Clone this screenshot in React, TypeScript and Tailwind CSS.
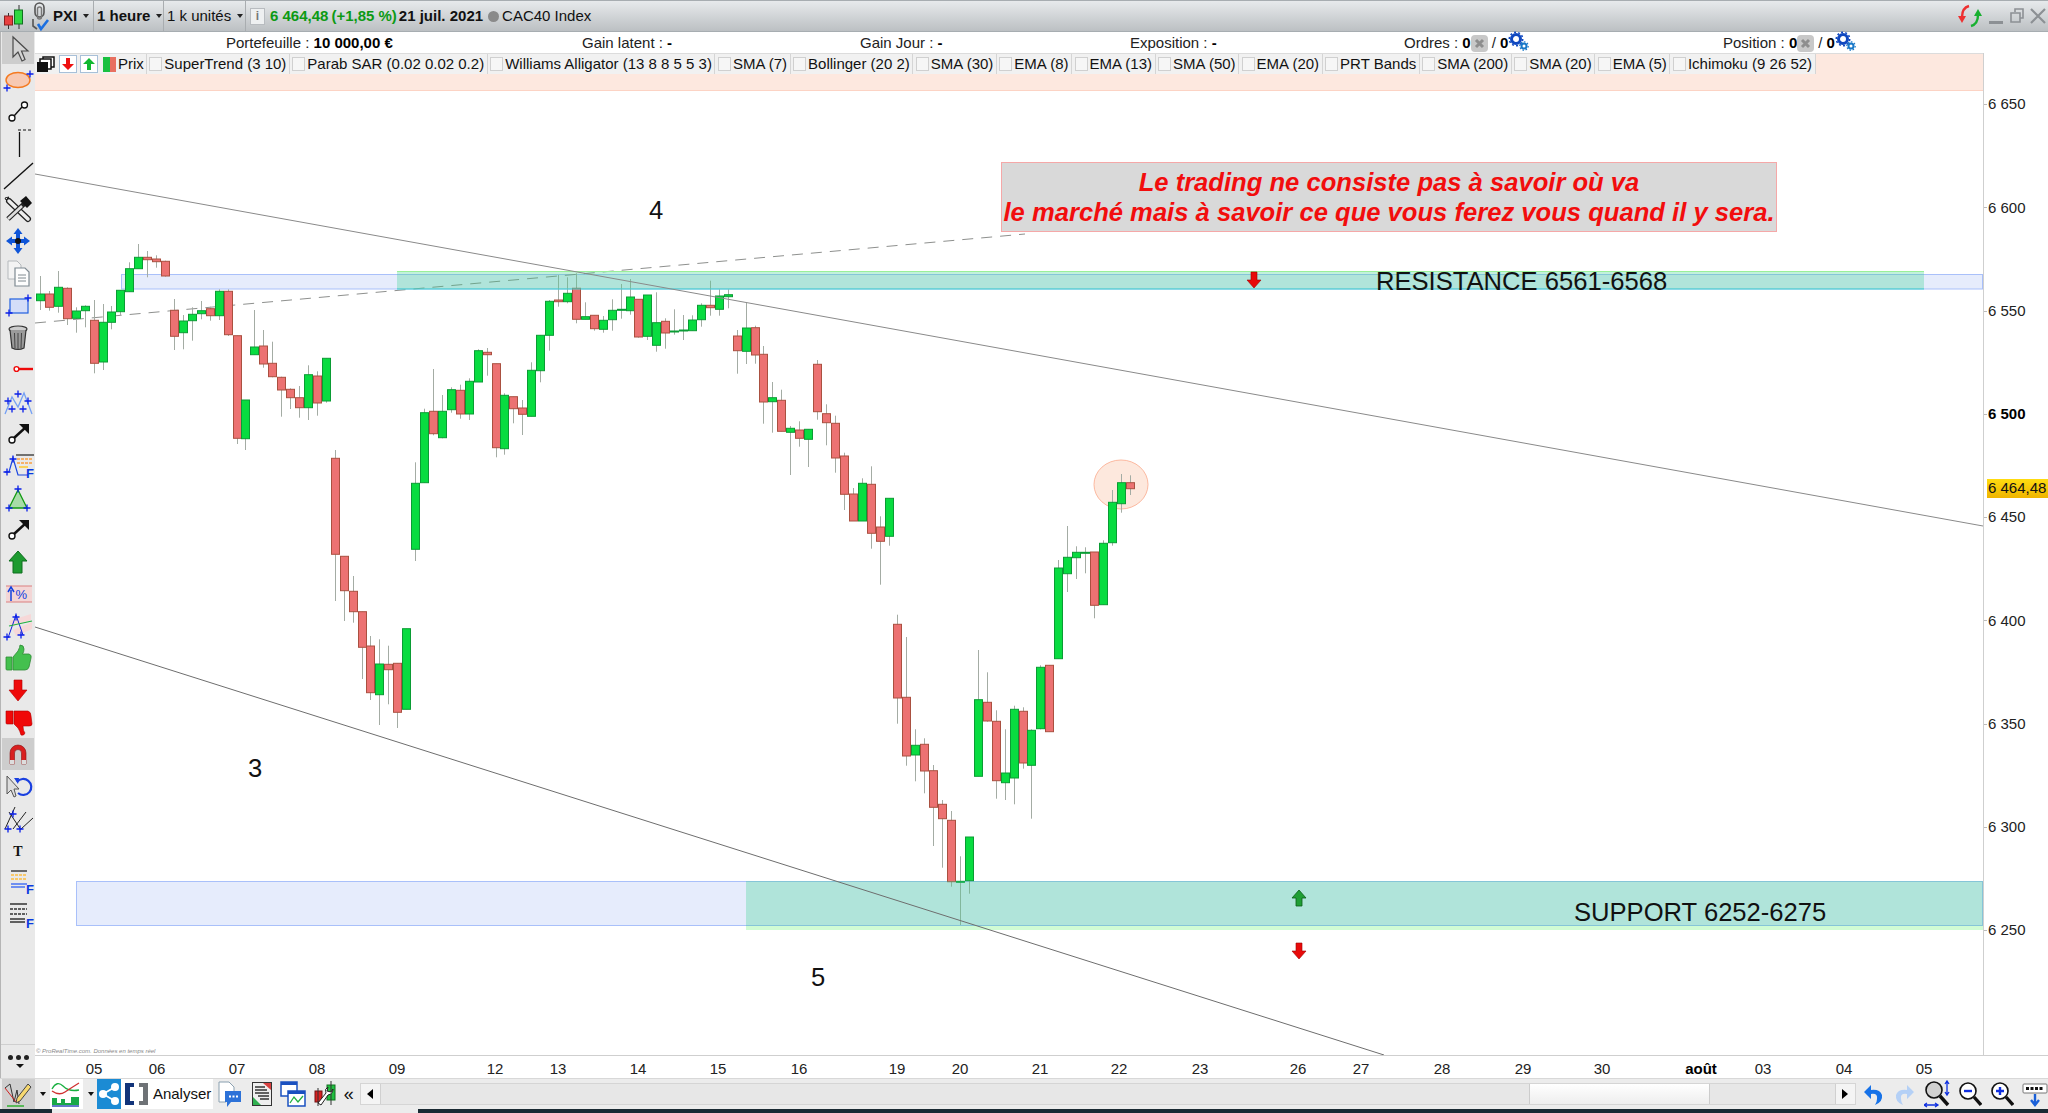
import React from "react";

type Candle = [number, number, number, number, number];

// top, bottom, wick top, wick bottom, 1 = up candle
const candles: Candle[] = [
  [294, 300.7, 276, 310, 1], [294, 307.3, 291, 310.7, 0], [287.3, 306.3, 271, 312.7, 1], [288.3, 318.7, 287.3, 325, 0],
  [311, 318.3, 307.3, 332.7, 1], [306.3, 310.7, 305.3, 327.3, 1], [320.3, 363.3, 300, 373.3, 0], [322.3, 362, 304, 370, 1],
  [312, 322.3, 306, 329.3, 1], [290.3, 311.7, 290, 316, 1], [268.7, 291.7, 262.3, 292, 1], [257.3, 268.7, 244, 268.7, 1],
  [257.3, 259.7, 251, 277.3, 0], [259, 261.7, 255.3, 267.7, 0], [261.3, 276, 260.7, 276.7, 0], [310.3, 336.3, 299, 350, 0],
  [321, 332.7, 315, 349.3, 1], [314.3, 320.7, 307.3, 340.7, 1], [310.7, 313.7, 301, 319.3, 1], [308.7, 315.7, 306.7, 320.7, 0],
  [291.3, 315.7, 289.3, 320, 1], [291.3, 334.7, 289.3, 336, 0], [335.7, 438.3, 335.7, 444, 0], [400, 438.7, 400, 450, 1],
  [347, 354.7, 310, 354.7, 1], [346, 364, 330, 367.7, 0], [363.3, 376.7, 341.7, 377.3, 0], [377.3, 390, 376.7, 416.7, 0],
  [389.3, 397.7, 388.3, 409, 0], [397.7, 407.7, 386, 417.7, 0], [374.7, 407.7, 365.3, 420, 1], [376, 403, 371.3, 415.7, 0],
  [358.3, 401, 358.3, 402.7, 1], [458.3, 554.3, 450, 601, 0], [556.3, 590.7, 556.3, 621, 0], [591.3, 611.7, 576, 622.7, 0],
  [611.7, 647.3, 611.7, 679, 0], [646, 692.7, 636, 700, 0], [664, 694.7, 639.3, 725, 1], [664.3, 669.7, 645.7, 704.3, 0],
  [663.3, 712.3, 663.3, 728, 0], [628.7, 709.3, 628.7, 709.3, 1], [483.3, 549.3, 462.3, 561, 1], [412.7, 482.7, 408.7, 482.7, 1],
  [411.3, 433.7, 369, 435.3, 0], [411.3, 437.7, 395, 438.3, 1], [389.7, 409.7, 387.3, 412.7, 1], [390.3, 414, 384.7, 418.7, 0],
  [381.3, 414, 378.3, 420, 1], [350.7, 382, 349.3, 382, 1], [352.3, 354.7, 348, 375.7, 0], [363.7, 447.7, 363.7, 457.3, 0],
  [395.3, 448.7, 393.3, 454.7, 1], [396.7, 408.7, 396.7, 423.3, 0], [408, 414.3, 400, 435, 0], [370.3, 416.3, 362.3, 416.3, 1],
  [335.3, 370.7, 335.3, 382.3, 1], [301.3, 335.3, 300, 350.7, 1], [300, 301.7, 275, 306.7, 0], [293.3, 301.7, 277.3, 303.3, 1],
  [288.3, 319.3, 273.3, 323.3, 0], [316.7, 319.3, 302.3, 319.3, 1], [315.3, 328.7, 315.3, 330.7, 0], [320.3, 329.3, 316, 332.7, 1],
  [310.3, 319.7, 299.3, 330.7, 1], [309.3, 310, 284, 318.7, 1], [297, 310.7, 279, 314.7, 1], [299.3, 337, 299.3, 337.7, 0],
  [295, 336.3, 295, 340, 1], [322.7, 345.3, 292.3, 351.7, 1], [321.3, 333, 318.3, 348.7, 0], [331, 332, 309.3, 334.7, 1],
  [330, 330.7, 315, 340, 1], [320, 330.7, 315.3, 330.7, 1], [305.3, 319.7, 303.3, 326.7, 1], [305.3, 307.7, 280.7, 315.7, 0],
  [296, 309.3, 289.3, 315.7, 1], [294.7, 296.7, 289.3, 308.3, 1], [336, 350.7, 330, 373.7, 0], [328, 351.3, 302.7, 364, 1],
  [327.7, 355, 325.7, 363.7, 0], [354.3, 402, 346, 423.7, 0], [397.7, 401.7, 382, 432.7, 1], [400.3, 431.3, 389.7, 431.3, 0],
  [428.3, 432.3, 426, 475, 1], [430, 438.3, 421.3, 446.7, 0], [429.3, 439.3, 429.3, 467, 1], [364.3, 411.7, 360, 419.7, 0],
  [413.7, 422.7, 404.3, 445.3, 0], [423.3, 458, 415.7, 472.7, 0], [456, 494.3, 452.7, 510, 0], [494, 521, 488, 521, 0],
  [483.3, 521, 478.3, 521, 1], [484.3, 533.3, 466.3, 548.7, 0], [527, 541.3, 516.3, 584.7, 0], [498.3, 536.3, 498.3, 545.7, 1],
  [624.3, 698, 614.7, 723.7, 0], [697.3, 756, 637, 765.7, 0], [745.3, 755, 729.3, 781.3, 1], [744.3, 771, 738.3, 793.3, 0],
  [770.7, 807.3, 765, 846, 0], [804.3, 818.7, 800, 867.7, 0], [820.3, 881.7, 811, 886.7, 0], [881.3, 882.3, 856.3, 925, 1],
  [837, 880.7, 837, 893.7, 1], [699.7, 776.3, 650, 776.3, 1], [702.3, 721, 672.3, 721.7, 0], [721.3, 780.7, 710.3, 798.7, 0],
  [773, 782.7, 729.3, 800, 1], [709.3, 778, 705.7, 804.3, 1], [711.3, 763, 707.3, 768.7, 0], [730.3, 765.3, 729.3, 818.7, 1],
  [667.3, 728.7, 665.3, 729.3, 1], [665.3, 731.7, 665.3, 731.7, 0], [568, 658.7, 560, 658.7, 1], [557.3, 573.7, 526, 592, 1],
  [552.3, 557.7, 546.3, 579, 1], [552.3, 553.3, 547.3, 573.3, 1], [552, 605.3, 552, 618.3, 0], [543.3, 604.7, 540.3, 604.7, 1],
  [502.3, 542.7, 490, 545.7, 1], [482.7, 503.7, 474, 512.7, 1], [482.7, 488.7, 475.3, 495, 0],
];

const indicators = [
  "SuperTrend (3 10)", "Parab SAR (0.02 0.02 0.2)", "Williams Alligator (13 8 8 5 5 3)", "SMA (7)", "Bollinger (20 2)",
  "SMA (30)", "EMA (8)", "EMA (13)", "SMA (50)", "EMA (20)", "PRT Bands", "SMA (200)", "SMA (20)", "EMA (5)", "Ichimoku (9 26 52)",
];

const prices = ["6 650", "6 600", "6 550", "6 500", "6 450", "6 400", "6 350", "6 300", "6 250"];

const dates: [string, number][] = [
  ["05", 94], ["06", 157], ["07", 237], ["08", 317], ["09", 397], ["12", 495], ["13", 558], ["14", 638], ["15", 718], ["16", 799],
  ["19", 897], ["20", 960], ["21", 1040], ["22", 1119], ["23", 1200], ["26", 1298], ["27", 1361], ["28", 1442], ["29", 1523],
  ["30", 1602], ["août", 1701], ["03", 1763], ["04", 1844], ["05", 1924],
];

const Plus = ({ x, y }: { x: number; y: number }) => (
  <path d={`M${x - 3.5} ${y}h7M${x} ${y - 3.5}v7`} stroke="#0a1fe8" strokeWidth="1.3" fill="none" />
);

const BigF = ({ x, y }: { x: number; y: number }) => (
  <text x={x} y={y} fontSize="13" fontWeight="700" fill="#0a3ae0" fontFamily="Liberation Sans">F</text>
);

const HandleArrow = () => (
  <>
    <circle cx="11" cy="22" r="3" fill="#fff" stroke="#111" strokeWidth="1.4" />
    <path d="M13 20L25 9" stroke="#111" strokeWidth="2.4" />
    <path d="M18 6H28V16Z" fill="#111" />
  </>
);

const toolIcons: React.ReactNode[] = [
  <path key="a" d="M12 4V24L17 19L21 28L24 26.5L20.5 18H27Z" fill="#d4d4d4" stroke="#4a4a4a" strokeWidth="1.2" />,
  <g key="b"><ellipse cx="17" cy="15" rx="12" ry="7.5" fill="#f7c9b2" stroke="#f47a20" strokeWidth="1.4" /><Plus x={29} y={9} /><Plus x={6} y={23} /></g>,
  <g key="c"><path d="M13 19L21 10" stroke="#111" strokeWidth="1.4" /><circle cx="11" cy="21" r="3" fill="#fff" stroke="#111" strokeWidth="1.3" /><circle cx="23.5" cy="8" r="3" fill="#fff" stroke="#111" strokeWidth="1.3" /></g>,
  <g key="d"><path d="M18.500 3V28" stroke="#111" strokeWidth="1.3" /><path d="M17 1H32" stroke="#111" strokeWidth="1.2" strokeDasharray="3 2" /></g>,
  <path key="e" d="M3 28L32 2" stroke="#111" strokeWidth="1.4" />,
  <g key="f">
    <path d="M8 7L27 25" stroke="#222" strokeWidth="6" strokeLinecap="round" /><path d="M8 7L27 25" stroke="#eee" strokeWidth="3.5" strokeLinecap="round" />
    <path d="M7 25L23 10" stroke="#222" strokeWidth="5" /><path d="M7 25L21 12" stroke="#ddd" strokeWidth="2.6" />
    <path d="M19 7L25 2L31 9L26 14Z" fill="#111" /><path d="M5 6L8 3L4 4Z" fill="#fff" stroke="#222" />
  </g>,
  <g key="g" fill="#0f55d8"><path d="M17 2L21.500 8H12.500Z" /><path d="M17 28L21.500 22H12.500Z" /><path d="M5 15L11 10.500V19.500Z" /><path d="M29 15L23 10.500V19.500Z" /><path d="M15 8H19V22H15Z M10 13H24V17H10Z" /><circle cx="17" cy="15" r="3" fill="#111" /></g>,
  <g key="h"><path d="M7 3H16L20 7V21H7Z" fill="#f3f3f3" stroke="#b5b9bc" /><path d="M14 10H24L28 14V28H14Z" fill="#fdfdfd" stroke="#7f8a92" strokeWidth="1.2" /><path d="M17 17H25M17 20H25M17 23H25" stroke="#808a90" /></g>,
  <g key="i"><rect x="9" y="9" width="18" height="14" fill="#d4ddf8" stroke="#2060e0" strokeWidth="1.2" /><Plus x={27} y={8} /><Plus x={8} y={23} /></g>,
  <g key="j"><ellipse cx="17" cy="7" rx="9" ry="3" fill="#ccc" stroke="#333" strokeWidth="1.2" /><path d="M9 8L11 26Q17 29 23 26L25 8" fill="#9a9a9a" stroke="#333" strokeWidth="1.2" /><path d="M13.500 11L14 26M17 11V27M20.500 11L20 26" stroke="#444" /></g>,
  <g key="k"><circle cx="15.500" cy="15" r="2.4" fill="#fff" stroke="#ee0a0a" strokeWidth="1.4" /><path d="M18 15H32" stroke="#ee0a0a" strokeWidth="2.4" /></g>,
  <g key="l"><path d="M4 28L11 11L17 21L23 7L31 28" fill="none" stroke="#74a0f4" strokeWidth="1.3" /><Plus x={7} y={15} /><Plus x={11} y={23} /><Plus x={17} y={8} /><Plus x={22} y={23} /><Plus x={27} y={15} /></g>,
  <g key="m"><HandleArrow /></g>,
  <g key="n"><path d="M4 22H8L12 8L17 25H27" fill="none" stroke="#1a46e0" strokeWidth="1.2" /><path d="M15 5H33" stroke="#222" strokeWidth="1.2" /><path d="M16 9H32M16 13H32" stroke="#f6b26b" strokeWidth="2" strokeDasharray="3 1" /><path d="M18 17H27" stroke="#f9d05c" strokeWidth="2" /><Plus x={6} y={22} /><Plus x={12} y={9} /><BigF x={25} y={28} /></g>,
  <g key="o"><path d="M8 26L17 8L26 26Z" fill="#a8dca8" stroke="#129a12" strokeWidth="1.3" /><Plus x={17} y={7} /><Plus x={8} y={26} /><Plus x={26} y={26} /></g>,
  <g key="p"><HandleArrow /></g>,
  <path key="q" d="M17 4L26 14H21V26H12V14H8Z" fill="#1d9a30" stroke="#0f6e1e" strokeWidth="1" />,
  <g key="r"><rect x="5" y="7" width="26" height="16" fill="#f3d6d6" /><path d="M5 7H31M5 23H31" stroke="#dc8080" strokeWidth="1.2" /><path d="M10 22V11M7 13L10 8L13 13" fill="none" stroke="#1040e0" strokeWidth="1.5" /><text x="14.500" y="20" fontSize="13" fill="#1040e0" fontFamily="Liberation Sans">%</text></g>,
  <g key="s"><path d="M8 10L30 3L30 9L10 16Z" fill="#f6d8d8" /><path d="M12 19L31 11V18L15 25Z" fill="#f6d8d8" /><path d="M7 27L15 4L22 24" fill="none" stroke="#0f1fe0" strokeWidth="1" /><path d="M8 15L31 10" stroke="#20b040" strokeWidth="1.2" /><Plus x={15} y={6} /><Plus x={6} y={26} /><Plus x={20} y={24} /></g>,
  <path key="t" d="M5 14H11V27H6Q5 27 5 26ZM12 14L17 8Q19 4 19 2Q23 2 23 6Q23 9 21.500 11H28Q31 12 30 15L28 24Q27 27 24 27H12Z" fill="#44c04e" stroke="#2e8a36" strokeWidth="0.8" />,
  <path key="u" d="M13 5H21V15H26L17 26L8 15H13Z" fill="#ee0a0a" stroke="#b00000" strokeWidth="0.6" />,
  <path key="v" d="M5 4H12V17H6Q5 17 5 16ZM13 4H27Q30 5 30 9L31 17Q31 19 28 19H22Q22 24 24 26Q23 29 20 28Q19 24 17 21L13 17Z" fill="#f00808" stroke="#b00000" strokeWidth="0.6" />,
  <g key="w"><path d="M9 25V14A8 8 0 0 1 25 14V25H20.500V14A3.500 3.500 0 0 0 13.500 14V25Z" fill="#d82020" stroke="#8a1010" strokeWidth="0.6" /><rect x="9" y="21" width="4.500" height="4" fill="#ddd" /><rect x="20.500" y="21" width="4.500" height="4" fill="#ddd" /></g>,
  <g key="x"><path d="M6 5V23L10 19L13 26L15 25L13 18H18Z" fill="#ddd" stroke="#555" /><path d="M16 11A8 8 0 1 1 17 22" fill="none" stroke="#1a40e0" strokeWidth="2.2" /><path d="M13 7L18 7L17 13Z" fill="#1a40e0" /></g>,
  <g key="y"><path d="M4 26L14 4M12 26L25 9M20 26L32 15" transform="translate(0 0)" stroke="#222" strokeWidth="1" /><path d="M8 9L20 27" stroke="#222" /><Plus x={12} y={11} /><Plus x={7} y={26} /><Plus x={19} y={26} /></g>,
  <text key="z" x="17" y="21" textAnchor="middle" fontSize="14" fontWeight="700" fill="#111" fontFamily="Liberation Serif">T</text>,
  <g key="aa"><path d="M10 4H26" stroke="#333" strokeWidth="1.4" /><path d="M10 8H26M10 12H26" stroke="#f8c86b" strokeWidth="2.2" strokeDasharray="3 1" /><path d="M10 17H26M10 20H24" stroke="#7090f0" strokeWidth="1.8" /><BigF x={25} y={27} /></g>,
  <g key="ab"><path d="M9 4H26M9 19H24M9 22H24" stroke="#333" strokeWidth="1.4" /><path d="M9 9H26M9 14H26" stroke="#333" strokeWidth="1.6" strokeDasharray="3 1" /><BigF x={25} y={28} /></g>,
];

const Caret = () => <span className="ml-1.5 h-0 w-0 border-x-[3.5px] border-t-[4px] border-x-transparent border-t-[#222]" />;

const Gears = () => (
  <svg width="21" height="20" viewBox="0 0 21 20" className="-mt-1">
    <circle cx="8" cy="8" r="4.5" fill="none" stroke="#1048c0" strokeWidth="3" />
    <circle cx="8" cy="8" r="6.700" fill="none" stroke="#1048c0" strokeWidth="1.600" strokeDasharray="2 2.200" />
    <circle cx="16" cy="15" r="2.500" fill="none" stroke="#1878c8" strokeWidth="2" />
    <circle cx="16" cy="15" r="4.200" fill="none" stroke="#1878c8" strokeWidth="1.200" strokeDasharray="1.600 1.600" />
  </svg>
);

const CloseBox = () => (
  <span className="flex h-[17px] w-[17px] items-center justify-center rounded-sm bg-[#c8c8c8]">
    <svg width="11" height="11" viewBox="0 0 11 11"><path d="M2 2L9 9M9 2L2 9" stroke="#8e8e8e" strokeWidth="3" /></svg>
  </span>
);

const TopBar = () => (
  <div className="flex h-8 shrink-0 items-center border-y border-y-[#a7adb1] bg-gradient-to-b from-[#e7eaec] to-[#bcc0c3] text-[15px] text-[#111]">
    <svg width="26" height="30" viewBox="0 0 26 30" className="ml-[1px] shrink-0">
      <path d="M7.500 12V28M18 4V28" stroke="#333" strokeWidth="1" />
      <rect x="3.500" y="15" width="8" height="9" fill="#e84040" stroke="#8a2020" />
      <rect x="13.500" y="9" width="8" height="14" fill="#30d840" stroke="#107020" />
    </svg>
    <svg width="20" height="30" viewBox="0 0 20 30" className="ml-[3px] shrink-0">
      <rect x="5" y="2" width="9" height="14" rx="4.500" fill="none" stroke="#555" strokeWidth="1.600" />
      <rect x="7.500" y="6" width="4" height="12" rx="2" fill="none" stroke="#777" strokeWidth="1.400" />
      <path d="M3 18V25L7 28" fill="none" stroke="#555" strokeWidth="1.600" />
      <path d="M8 23L11 28L18 19" fill="none" stroke="#1b6fe0" strokeWidth="2.600" />
    </svg>
    <div className="ml-[3px] flex h-full w-[41px] shrink-0 items-center border-r border-r-[#a9adb0] font-bold">
      PXI<Caret />
    </div>
    <div className="flex h-full w-[70px] shrink-0 items-center border-r border-r-[#a9adb0] pl-[3px] font-bold">
      1 heure<Caret />
    </div>
    <div className="flex h-full w-[82px] shrink-0 items-center border-r border-r-[#a9adb0] pl-[3px]">
      1 k unités<Caret />
    </div>
    <span className="ml-[4px] flex h-[17px] w-[15px] shrink-0 items-center justify-center border border-[#b8bcc0] bg-[#eef0f1] text-xs font-bold text-[#777]">i</span>
    <span className="ml-[5px] font-bold text-[#0c9a14]">6 464,48</span>
    <span className="ml-[3px] font-bold text-[#0c9a14]">(+1,85 %)</span>
    <span className="ml-[2px] font-bold">21 juil. 2021</span>
    <span className="ml-[5px] h-[11px] w-[11px] rounded-full bg-[#8a8a8a]" />
    <span className="ml-[3px]">CAC40 Index</span>
    <div className="ml-auto flex items-center">
      <svg width="26" height="26" viewBox="0 0 26 26" className="shrink-0">
        <path d="M12 3Q5 5 5 14" fill="none" stroke="#ee3030" strokeWidth="2.400" />
        <path d="M1 13H9L5 20Z" fill="#ee3030" />
        <path d="M14 23Q21 21 21 12" fill="none" stroke="#18b030" strokeWidth="2.400" />
        <path d="M17 13H25L21 6Z" fill="#18b030" />
      </svg>
      <span className="ml-[6px] mt-3 h-[3px] w-[14px] bg-[#8c9094]" />
      <svg width="14" height="16" viewBox="0 0 14 16" className="ml-[7px]">
        <path d="M5 4V1H13V10H10M1 5H10V14H1Z" fill="none" stroke="#8c9094" strokeWidth="1.600" />
      </svg>
      <svg width="16" height="16" viewBox="0 0 16 16" className="ml-[6px] mr-[2px]">
        <path d="M1 1L15 15M15 1L1 15" stroke="#8c9094" strokeWidth="2.200" />
      </svg>
    </div>
  </div>
);

const ToolBar = () => (
  <div className="flex w-[35px] shrink-0 flex-col border-l border-l-[#b5b5b5] bg-[#e9e9e9]">
    {toolIcons.map((icon, i) => (
      <div key={i} className={`ml-px flex h-[32.1px] w-[32px] shrink-0 items-center justify-center ${i === 0 || i === 22 ? "bg-[#cdcdcd]" : ""}`}>
        <svg width="34" height="30" viewBox="0 0 34 30" className="shrink-0">{icon}</svg>
      </div>
    ))}
    <div className="mt-auto flex h-[34px] flex-col items-center justify-center border-t border-t-[#cfcfcf]">
      <div className="flex gap-[3px]">
        <span className="h-[5px] w-[5px] rounded-full bg-[#222]" />
        <span className="h-[5px] w-[5px] rounded-full bg-[#222]" />
        <span className="h-[5px] w-[5px] rounded-full bg-[#222]" />
      </div>
      <span className="ml-1 mt-1 h-0 w-0 border-x-[4px] border-t-[4px] border-x-transparent border-t-[#111]" />
    </div>
  </div>
);

const InfoRow = () => (
  <div className="grid h-[21px] shrink-0 grid-cols-[356px_278px_270px_274px_319px_1fr] items-center pl-[191px] text-[15px] text-[#222]">
    <div>Portefeuille : <b className="text-black">10 000,00 €</b></div>
    <div>Gain latent : <b className="text-black">-</b></div>
    <div>Gain Jour : <b className="text-black">-</b></div>
    <div>Exposition : <b className="text-black">-</b></div>
    <div className="flex items-center">Ordres :&nbsp;<b className="text-black">0</b><CloseBox /><span className="ml-1">/</span>&nbsp;<b className="text-black">0</b><Gears /></div>
    <div className="flex items-center">Position :&nbsp;<b className="text-black">0</b><CloseBox /><span className="ml-1">/</span>&nbsp;<b className="text-black">0</b><Gears /></div>
  </div>
);

const Legend = () => (
  <div className="h-[38px] border-y border-b-[#fcd3c4] border-t-[#dcdcdc] bg-[#fde8df]">
    <div className="flex h-5 items-stretch text-[15px] leading-5 text-[#111]">
      <div className="flex items-center gap-[3px] border-r border-r-[#d5d5d5] bg-[#f1f1f1] pr-[2px]">
        <svg width="20" height="18" viewBox="0 0 20 18" className="ml-[1px]">
          <rect x="7" y="2" width="11" height="10" fill="#fff" stroke="#111" strokeWidth="1.500" />
          <rect x="4" y="4" width="11" height="10" fill="#fff" stroke="#111" strokeWidth="1.500" />
          <rect x="1" y="7" width="11" height="10" fill="#111" />
        </svg>
        <span className="flex h-[18px] w-[18px] items-center justify-center border border-[#a8c0d8] bg-white">
          <svg width="14" height="14" viewBox="0 0 14 14"><path d="M5 1H9V7H13L7 13L1 7H5Z" fill="#ee1010" /></svg>
        </span>
        <span className="flex h-[18px] w-[18px] items-center justify-center border border-[#a8c0d8] bg-white">
          <svg width="14" height="14" viewBox="0 0 14 14"><path d="M5 13H9V7H13L7 1L1 7H5Z" fill="#10b830" /></svg>
        </span>
        <span className="ml-[2px] flex h-[15px] w-[13px]">
          <span className="w-1/2 bg-[#18c040]" />
          <span className="w-1/2 bg-[#e87060]" />
        </span>
        <span className="ml-[-1px]">Prix</span>
      </div>
      {indicators.map((name) => (
        <div key={name} className="flex items-center gap-[2px] border-r border-r-[#d5d5d5] bg-[#f1f1f1] pl-[2.500px] pr-[2.500px]">
          <span className="h-[14px] w-[13px] border border-[#d0d0d0] bg-[#f6f6f6]" />
          <span className="whitespace-nowrap">{name}</span>
        </div>
      ))}
    </div>
  </div>
);

const ChartSvg = () => (
  <svg viewBox="35 53 1948 1002" className="absolute inset-0 h-full w-full">
    <rect x="121.500" y="274.500" width="1861" height="14.500" fill="#e6ecfc" stroke="#a9c0fa" />
    <rect x="76.500" y="881.500" width="1906" height="44" fill="#e6ecfc" stroke="#a9c0fa" />
    <path d="M35 323L1025 234" stroke="#8e908e" strokeWidth="1" strokeDasharray="11 8" />
    <ellipse cx="1121" cy="484.500" rx="27" ry="24.500" fill="#fde8dd" stroke="#fcb9a0" />
    {candles.map(([top, bottom, wickTop, wickBottom, up], i) => {
      const x = Math.round(40 + i * 8.932);
      return (
        <g key={i}>
          <path d={`M${x + 0.5} ${wickTop}V${wickBottom}`} stroke="#a4aca4" />
          <rect
            x={x - 3.5}
            y={top}
            width="8"
            height={Math.max(bottom - top, 1)}
            fill={up ? "#08dc40" : "#ec7272"}
            stroke={up ? "#0a9c34" : "#aa5040"}
          />
        </g>
      );
    })}
    <rect x="397" y="271.500" width="1527" height="17.500" fill="#34d08a" fillOpacity="0.3" />
    <path d="M397 271.500H1924" stroke="#9af09a" />
    <path d="M397 289H1924" stroke="#40d0d0" />
    <rect x="746" y="881" width="1237" height="45" fill="#34d08a" fillOpacity="0.3" />
    <rect x="746" y="926" width="1237" height="4" fill="#d0fcd4" />
    <path d="M35 174L1983 526" stroke="#8a8a8a" />
    <path d="M35 627L1384 1055" stroke="#6e6e6e" />
    <path d="M1251 272H1257V280H1261L1254 288L1247 280H1251Z" fill="#e80a0a" stroke="#a00000" strokeWidth="0.6" />
    <path d="M1296 906H1302V898H1306L1299 890L1292 898H1296Z" fill="#1f9e34" stroke="#0a5e18" strokeWidth="0.8" />
    <path d="M1296 943H1302V951H1306L1299 959L1292 951H1296Z" fill="#e80a0a" stroke="#a00000" strokeWidth="0.6" />
  </svg>
);

const Plot = () => (
  <div className="relative min-w-0 flex-1 overflow-hidden border-r border-r-[#cfcfcf]">
    <ChartSvg />
    <div className="relative"><Legend /></div>
    <div className="absolute left-[966px] top-[109px] flex h-[70px] w-[776px] flex-col items-center justify-center border border-[#f5a8a8] bg-[#d9d9d9] text-[25.600px] font-bold italic leading-[30px] text-[#f20d0d]">
      <span>Le trading ne consiste pas à savoir où va</span>
      <span>le marché mais à savoir ce que vous ferez vous quand il y sera.</span>
    </div>
    <span className="absolute left-[614px] top-[142px] text-[25.600px] leading-[30px] text-[#111]">4</span>
    <span className="absolute left-[213px] top-[700px] text-[25.600px] leading-[30px] text-[#111]">3</span>
    <span className="absolute left-[776px] top-[909px] text-[25.600px] leading-[30px] text-[#111]">5</span>
    <span className="absolute left-[1341px] top-[213px] text-[25.600px] leading-[30px] text-[#111]">RESISTANCE 6561-6568</span>
    <span className="absolute left-[1539px] top-[844px] text-[25.600px] leading-[30px] text-[#111]">SUPPORT 6252-6275</span>
    <span className="absolute bottom-[0px] left-[1px] text-[6px] italic leading-[8px] text-[#888]">© ProRealTime.com. Données en temps réel</span>
  </div>
);

const PriceAxis = () => (
  <div className="relative flex w-[64px] shrink-0 flex-col text-[15px] text-[#222]">
    {prices.map((price) => (
      <div key={price} className={`flex h-[103.250px] shrink-0 items-center gap-[1px] ${price === "6 500" ? "font-bold text-black" : ""}`}>
        <span className="h-px w-[3px] bg-[#bbb]" />
        {price}
      </div>
    ))}
    <div className="absolute left-[3px] top-[426px] flex h-[19px] w-[61px] items-center bg-gradient-to-b from-[#ffdc10] to-[#efb400] pl-[1px] text-[#111]">6 464,48</div>
  </div>
);

const DateAxis = () => (
  <div className="relative h-[23px] shrink-0 border-t border-t-[#cfcfcf] text-[15px] text-[#222]">
    {dates.map(([label, x]) => (
      <span
        key={`${label}-${x}`}
        className={`absolute top-[2px] -translate-x-1/2 ${label === "août" ? "font-bold text-black" : ""}`}
        style={{ left: x - 35 }}
      >
        {label}
      </span>
    ))}
  </div>
);

const BottomBar = () => (
  <div className="flex h-[31px] shrink-0 items-center border-t border-t-[#d8d8d8] bg-[#ececec] text-[15px] text-[#111]">
    <div className="ml-[2px] flex h-full w-[33px] items-center justify-center bg-[#cfcfcf]">
      <svg width="28" height="28" viewBox="0 0 28 28">
        <path d="M1 8L6 4L10 22L13 10L15 24" fill="none" stroke="#333" />
        <path d="M1 8L12 22" stroke="#d02020" />
        <path d="M13 18L24 4L27 7L16 21L12 23Z" fill="#f6d870" stroke="#444" />
        <path d="M3 26H20" stroke="#30b030" strokeWidth="1.500" />
      </svg>
    </div>
    <span className="ml-[5px] h-0 w-0 border-x-[3.500px] border-t-[4px] border-x-transparent border-t-[#111]" />
    <div className="ml-[4px] flex h-full w-[33px] items-center justify-center bg-white">
      <svg width="30" height="28" viewBox="0 0 30 28">
        <path d="M1 9Q6 0 12 6T28 10" fill="none" stroke="#18b040" strokeWidth="1.300" />
        <path d="M1 11Q8 16 14 12T28 3" fill="none" stroke="#d03030" strokeWidth="1.300" />
        <path d="M1 18H6V23H10V19H14V23H20V17H28V25H1Z" fill="#18a848" />
        <path d="M1 26H28" stroke="#2040b0" strokeWidth="1.400" />
      </svg>
    </div>
    <span className="ml-[5px] h-0 w-0 border-x-[3.500px] border-t-[4px] border-x-transparent border-t-[#111]" />
    <div className="ml-[3px] flex h-full w-[24px] items-center justify-center bg-[#1b8bd4]">
      <svg width="22" height="26" viewBox="0 0 22 26">
        <path d="M17 6L5 13L17 20" fill="none" stroke="#fff" strokeWidth="1.800" />
        <circle cx="17" cy="6" r="4" fill="#fff" />
        <circle cx="5" cy="13" r="4" fill="#fff" />
        <circle cx="17" cy="20" r="4" fill="#fff" />
      </svg>
    </div>
    <div className="flex h-full w-[92px] items-center bg-white pl-[3px]">
      <svg width="25" height="26" viewBox="0 0 25 26" className="shrink-0">
        <path d="M1 2H10V6H6V20H10V24H1Z" fill="#12347a" />
        <path d="M15 2H24V24H15V20H19V6H15Z" fill="#6e7276" />
      </svg>
      <span className="ml-[4px]">Analyser</span>
    </div>
    <svg width="26" height="28" viewBox="0 0 26 28" className="ml-[4px] shrink-0">
      <path d="M2 2H12L17 7V12H9V22H2Z" fill="#fff" stroke="#8aa0b0" />
      <path d="M8 11H24V22H14L10 27V22H8Z" fill="#2d72d8" />
      <path d="M12 16.500h2M15.500 16.500h2M19 16.500h2" stroke="#fff" strokeWidth="2" />
    </svg>
    <svg width="22" height="26" viewBox="0 0 22 26" className="ml-[8px] shrink-0">
      <rect x="1.500" y="1.500" width="19" height="23" fill="#eee" stroke="#333" />
      <path d="M4 6H14M4 9H16M4 12H18M7 15H18M9 18H18" stroke="#333" strokeWidth="1.500" />
      <path d="M12 2H20V9Z" fill="#d84040" />
      <path d="M2 24V16L10 24Z" fill="#30b050" />
    </svg>
    <svg width="26" height="26" viewBox="0 0 26 26" className="ml-[7px] shrink-0">
      <rect x="1" y="1" width="16" height="14" fill="#fff" stroke="#1a50c0" strokeWidth="1.500" />
      <path d="M1 1H17V4H1Z" fill="#1a50c0" />
      <rect x="8" y="10" width="17" height="15" fill="#fff" stroke="#1a50c0" strokeWidth="1.500" />
      <path d="M8 10H25V13H8Z" fill="#1a50c0" />
      <path d="M10 22L14 16L18 21L23 15" fill="none" stroke="#20b040" strokeWidth="1.300" />
    </svg>
    <svg width="24" height="26" viewBox="0 0 24 26" className="ml-[7px] shrink-0">
      <rect x="2" y="10" width="7" height="11" fill="#d82020" stroke="#701010" />
      <rect x="14" y="4" width="8" height="15" fill="#20c040" stroke="#107020" />
      <path d="M18 0V24M5 7V25" stroke="#333" />
      <path d="M5 22L13 12Q11 8 15 6L14 10L18 11L20 8Q20 13 15 14L8 24Z" fill="#fff" stroke="#222" />
    </svg>
    <span className="ml-[7px] w-[13px] text-lg leading-none">«</span>
    <div className="ml-[3px] flex h-[22px] w-[1498px] items-stretch border border-[#d5d5d5] bg-[#e7e7e7]">
      <span className="flex w-[20px] items-center justify-center border-r border-r-[#d0d0d0] bg-[#f4f4f4]">
        <span className="h-0 w-0 border-y-[5px] border-r-[6px] border-y-transparent border-r-black" />
      </span>
      <span className="ml-[1148px] w-[181px] border-x border-x-[#cccccc] bg-gradient-to-b from-white to-[#eeeeee]" />
      <span className="ml-auto flex w-[20px] items-center justify-center border-l border-l-[#d0d0d0] bg-[#f4f4f4]">
        <span className="h-0 w-0 border-y-[5px] border-l-[6px] border-y-transparent border-l-black" />
      </span>
    </div>
    <svg width="22" height="24" viewBox="0 0 22 24" className="ml-[7px] shrink-0">
      <path d="M12 23Q20 20 19 13Q17 7 8 8V3L1 10L8 17V12Q15 11 14 17Q14 20 12 23Z" fill="#1672e8" />
    </svg>
    <svg width="22" height="24" viewBox="0 0 22 24" className="ml-[9px] shrink-0">
      <path d="M9 23Q1 20 2 13Q4 7 13 8V3L20 10L13 17V12Q6 11 7 17Q7 20 9 23Z" fill="#b4d0f6" />
    </svg>
    <svg width="28" height="28" viewBox="0 0 28 28" className="ml-[8px] shrink-0">
      <circle cx="10" cy="10" r="8" fill="#d0d0d0" stroke="#111" strokeWidth="1.600" />
      <path d="M16 16L24 25" stroke="#111" strokeWidth="3.400" />
      <path d="M23 2V14M21 4L23 1L25 4M21 12L23 15L25 12" fill="none" stroke="#0f30e0" strokeWidth="1.300" />
      <path d="M1 25H13M3 23L0 25L3 27M11 23L14 25L11 27" fill="none" stroke="#0f30e0" strokeWidth="1.300" />
    </svg>
    <svg width="24" height="26" viewBox="0 0 24 26" className="ml-[6px] shrink-0">
      <circle cx="10" cy="10" r="8" fill="#fff" stroke="#111" strokeWidth="1.600" />
      <path d="M16 16L23 24" stroke="#111" strokeWidth="3.400" />
      <path d="M6 10H14" stroke="#1030e0" strokeWidth="2.400" />
    </svg>
    <svg width="24" height="26" viewBox="0 0 24 26" className="ml-[8px] shrink-0">
      <circle cx="10" cy="10" r="8" fill="#fff" stroke="#111" strokeWidth="1.600" />
      <path d="M16 16L23 24" stroke="#111" strokeWidth="3.400" />
      <path d="M6 10H14M10 6V14" stroke="#1030e0" strokeWidth="2.400" />
    </svg>
    <svg width="26" height="26" viewBox="0 0 26 26" className="ml-[8px] shrink-0">
      <rect x="1" y="3" width="24" height="9" rx="1" fill="#fff" stroke="#777" />
      <path d="M4 7.500h3M8.500 7.500h3M13 7.500h3M17.500 7.500h3" stroke="#111" strokeWidth="3" />
      <path d="M13 13V22M9 19L13 24L17 19" fill="none" stroke="#1a60d8" strokeWidth="2.400" />
    </svg>
  </div>
);

const App = () => {
  return (
    <div className="flex h-[1113px] w-[2048px] flex-col overflow-hidden bg-white font-['Liberation_Sans',Arial,sans-serif]">
      <TopBar />
      {/* === Main Section === */}
      <div className="flex min-h-0 flex-1">
        <ToolBar />
        <div className="flex min-w-0 flex-1 flex-col">
          <InfoRow />
          <div className="flex min-h-0 flex-1">
            <Plot />
            <PriceAxis />
          </div>
          <DateAxis />
        </div>
      </div>
      <BottomBar />
      <div className="h-1 shrink-0 bg-[#1a2a33] pl-[52px]">
        <div className="h-full w-[366px] bg-[#ececec]" />
      </div>
    </div>
  );
};

export default App;
